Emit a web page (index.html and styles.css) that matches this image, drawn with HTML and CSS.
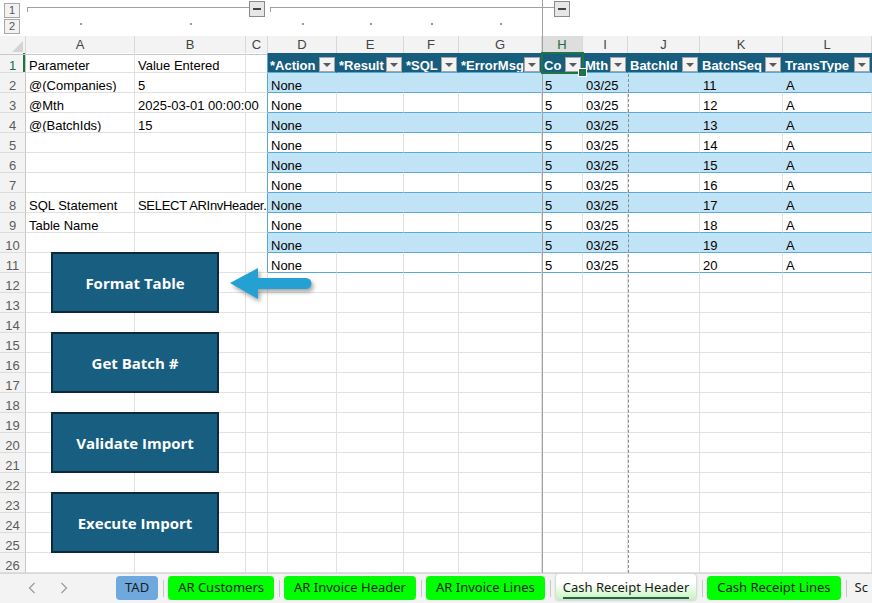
FILE: index.html
```html
<!DOCTYPE html>
<html lang="en">
<head>
  <meta charset="UTF-8">
  <link rel="stylesheet" href="styles.css">
</head>
<body>
  <div class="app">
    <div class="grid outline">
      <div class="levels"><div class="lvl">1</div><div class="lvl">2</div></div>
      <div class="glines">
        <div class="bracket b1"></div><div class="collapse"></div>
        <div class="bracket b2"></div><div class="collapse"></div>
      </div>
      <div class="dot"></div><div class="dot"></div><div></div>
      <div class="dot"></div><div class="dot"></div><div class="dot"></div><div class="dot"></div>
    </div>

    <div class="sheet">
      <div class="grid colhead">
        <div class="corner"></div><div>A</div><div>B</div><div>C</div><div>D</div><div>E</div><div>F</div><div>G</div><div class="on">H</div><div>I</div><div>J</div><div>K</div><div>L</div>
      </div>

      <div class="grid row">
        <div class="rh on">1</div><div>Parameter</div><div>Value Entered</div><div class="tl"></div>
        <div class="th">*Action<span class="dd"></span></div>
        <div class="th">*Result<span class="dd"></span></div>
        <div class="th">*SQL<span class="dd"></span></div>
        <div class="th">*ErrorMsg<span class="dd"></span></div>
        <div class="th">Co<span class="dd"></span></div>
        <div class="th">Mth<span class="dd"></span></div>
        <div class="th">BatchId<span class="dd"></span></div>
        <div class="th">BatchSeq<span class="dd"></span></div>
        <div class="th">TransType<span class="dd"></span></div>
      </div>
      <div class="grid row band">
        <div class="rh">2</div><div>@(Companies)</div><div>5</div><div class="tl"></div>
        <div class="t">None</div><div class="t"></div><div class="t"></div><div class="t"></div><div class="t">5</div><div class="t">03/25</div><div class="t"></div><div class="t">11</div><div class="t">A</div>
      </div>
      <div class="grid row">
        <div class="rh">3</div><div>@Mth</div><div class="span2 tl">2025-03-01 00:00:00</div>
        <div class="t">None</div><div class="t"></div><div class="t"></div><div class="t"></div><div class="t">5</div><div class="t">03/25</div><div class="t"></div><div class="t">12</div><div class="t">A</div>
      </div>
      <div class="grid row band">
        <div class="rh">4</div><div>@(BatchIds)</div><div>15</div><div class="tl"></div>
        <div class="t">None</div><div class="t"></div><div class="t"></div><div class="t"></div><div class="t">5</div><div class="t">03/25</div><div class="t"></div><div class="t">13</div><div class="t">A</div>
      </div>
      <div class="grid row">
        <div class="rh">5</div><div></div><div></div><div class="tl"></div>
        <div class="t">None</div><div class="t"></div><div class="t"></div><div class="t"></div><div class="t">5</div><div class="t">03/25</div><div class="t"></div><div class="t">14</div><div class="t">A</div>
      </div>
      <div class="grid row band">
        <div class="rh">6</div><div></div><div></div><div class="tl"></div>
        <div class="t">None</div><div class="t"></div><div class="t"></div><div class="t"></div><div class="t">5</div><div class="t">03/25</div><div class="t"></div><div class="t">15</div><div class="t">A</div>
      </div>
      <div class="grid row">
        <div class="rh">7</div><div></div><div></div><div class="tl"></div>
        <div class="t">None</div><div class="t"></div><div class="t"></div><div class="t"></div><div class="t">5</div><div class="t">03/25</div><div class="t"></div><div class="t">16</div><div class="t">A</div>
      </div>
      <div class="grid row band">
        <div class="rh">8</div><div>SQL Statement</div><div class="span2 tl tight">SELECT ARInvHeader.</div>
        <div class="t">None</div><div class="t"></div><div class="t"></div><div class="t"></div><div class="t">5</div><div class="t">03/25</div><div class="t"></div><div class="t">17</div><div class="t">A</div>
      </div>
      <div class="grid row">
        <div class="rh">9</div><div>Table Name</div><div></div><div class="tl"></div>
        <div class="t">None</div><div class="t"></div><div class="t"></div><div class="t"></div><div class="t">5</div><div class="t">03/25</div><div class="t"></div><div class="t">18</div><div class="t">A</div>
      </div>
      <div class="grid row band">
        <div class="rh">10</div><div></div><div></div><div class="tl"></div>
        <div class="t">None</div><div class="t"></div><div class="t"></div><div class="t"></div><div class="t">5</div><div class="t">03/25</div><div class="t"></div><div class="t">19</div><div class="t">A</div>
      </div>
      <div class="grid row">
        <div class="rh">11</div><div></div><div></div><div class="tl"></div>
        <div class="t">None</div><div class="t"></div><div class="t"></div><div class="t"></div><div class="t">5</div><div class="t">03/25</div><div class="t"></div><div class="t">20</div><div class="t">A</div>
      </div>
      <div class="grid row"><div class="rh">12</div><div></div><div></div><div></div><div></div><div></div><div></div><div></div><div></div><div></div><div></div><div></div><div></div></div>
      <div class="grid row"><div class="rh">13</div><div></div><div></div><div></div><div></div><div></div><div></div><div></div><div></div><div></div><div></div><div></div><div></div></div>
      <div class="grid row"><div class="rh">14</div><div></div><div></div><div></div><div></div><div></div><div></div><div></div><div></div><div></div><div></div><div></div><div></div></div>
      <div class="grid row"><div class="rh">15</div><div></div><div></div><div></div><div></div><div></div><div></div><div></div><div></div><div></div><div></div><div></div><div></div></div>
      <div class="grid row"><div class="rh">16</div><div></div><div></div><div></div><div></div><div></div><div></div><div></div><div></div><div></div><div></div><div></div><div></div></div>
      <div class="grid row"><div class="rh">17</div><div></div><div></div><div></div><div></div><div></div><div></div><div></div><div></div><div></div><div></div><div></div><div></div></div>
      <div class="grid row"><div class="rh">18</div><div></div><div></div><div></div><div></div><div></div><div></div><div></div><div></div><div></div><div></div><div></div><div></div></div>
      <div class="grid row"><div class="rh">19</div><div></div><div></div><div></div><div></div><div></div><div></div><div></div><div></div><div></div><div></div><div></div><div></div></div>
      <div class="grid row"><div class="rh">20</div><div></div><div></div><div></div><div></div><div></div><div></div><div></div><div></div><div></div><div></div><div></div><div></div></div>
      <div class="grid row"><div class="rh">21</div><div></div><div></div><div></div><div></div><div></div><div></div><div></div><div></div><div></div><div></div><div></div><div></div></div>
      <div class="grid row"><div class="rh">22</div><div></div><div></div><div></div><div></div><div></div><div></div><div></div><div></div><div></div><div></div><div></div><div></div></div>
      <div class="grid row"><div class="rh">23</div><div></div><div></div><div></div><div></div><div></div><div></div><div></div><div></div><div></div><div></div><div></div><div></div></div>
      <div class="grid row"><div class="rh">24</div><div></div><div></div><div></div><div></div><div></div><div></div><div></div><div></div><div></div><div></div><div></div><div></div></div>
      <div class="grid row"><div class="rh">25</div><div></div><div></div><div></div><div></div><div></div><div></div><div></div><div></div><div></div><div></div><div></div><div></div></div>
      <div class="grid row"><div class="rh">26</div><div></div><div></div><div></div><div></div><div></div><div></div><div></div><div></div><div></div><div></div><div></div><div></div></div>
    </div>

    <div class="tabbar">
      <div class="nav">
        <svg width="8" height="12" viewBox="0 0 8 12"><polyline points="6.5,1 1.5,6 6.5,11" fill="none" stroke="#9a9a9a" stroke-width="1.2"/></svg>
        <svg width="8" height="12" viewBox="0 0 8 12"><polyline points="1.5,1 6.5,6 1.5,11" fill="none" stroke="#9a9a9a" stroke-width="1.2"/></svg>
      </div>
      <div class="tab tad">TAD</div><div class="sep"></div>
      <div class="tab">AR Customers</div><div class="sep"></div>
      <div class="tab">AR Invoice Header</div><div class="sep"></div>
      <div class="tab">AR Invoice Lines</div><div class="sep"></div>
      <div class="tab active"><span>Cash Receipt Header</span></div><div class="sep"></div>
      <div class="tab">Cash Receipt Lines</div><div class="sep"></div>
      <div class="tab plain">Sc</div>
    </div>

    <!-- things drawn over the grid -->
    <div class="freeze"></div>
    <div class="pagebreak"></div>
    <div class="selbox"></div>

    <div class="macros">
      <button class="macro">Format Table</button>
      <button class="macro">Get Batch #</button>
      <button class="macro">Validate Import</button>
      <button class="macro">Execute Import</button>
    </div>

    <svg class="arrow" width="92" height="44" viewBox="0 0 92 44">
      <path d="M4 21 L32 6 L32 16 L80 16 A5.5 5.5 0 0 1 80 27 L32 27 L32 37 Z" fill="#25a0d3"/>
    </svg>
  </div>
</body>
</html>
```

FILE: styles.css
```css
* { box-sizing: border-box; }
body { margin: 0; background: #fff; font-family: "Liberation Sans", Arial, sans-serif; font-size: 13px; color: #000; }
.app { position: relative; width: 872px; height: 603px; overflow: hidden; }

.grid { display: grid; grid-template-columns: 26px 109px 111px 22px 69px 67px 55px 83px 41px 45px 72px 83px 1fr; }

/* outline (grouping) strip */
.outline { height: 36px; grid-template-rows: 18px 18px; }
.levels { grid-row: 1 / 3; display: flex; flex-direction: column; gap: 1px; padding: 3px 0 0 4px; }
.lvl { width: 16px; height: 15px; border: 1px solid #a8a8a8; background: #f2f2f2; color: #555; font-size: 11px; line-height: 13px; text-align: center; }
.glines { grid-column: 2 / -1; display: flex; align-items: flex-start; padding-left: 1px; }
.bracket { height: 5px; margin-top: 7px; border-top: 1px solid #a0a0a0; border-left: 1px solid #a0a0a0; }
.b1 { width: 222px; }
.b2 { width: 284px; margin-left: 5px; }
.collapse { width: 16px; height: 16px; margin-top: 1px; border: 1px solid #8a8a8a; background: #e6e6e6; display: flex; align-items: center; justify-content: center; }
.collapse::after { content: ""; width: 8px; height: 2px; background: #444; }
.dot { display: flex; justify-content: center; padding-top: 5px; }
.dot::after { content: ""; width: 2px; height: 2px; background: #9a9a9a; }

/* column letters */
.colhead { height: 17px; background: #f3f3f3; }
.colhead > div { border-right: 1px solid #d8d8d8; border-bottom: 1px solid #c8c8c8; color: #444; line-height: 17px; text-align: center; }
.colhead > .on { background: #dedede; color: #1d6b3f; border-bottom: 2px solid #217346; }
.corner { position: relative; }
.corner::after { content: ""; position: absolute; right: 2px; bottom: 2px; border-left: 11px solid transparent; border-bottom: 11px solid #d4d4d4; }

/* cells */
.row { height: 20px; }
.row > div { border-right: 1px solid #e1e1e1; border-bottom: 1px solid #e1e1e1; padding: 5px 2px 0 3px; line-height: 15px; white-space: nowrap; overflow: hidden; }
.row > .rh { background: #f3f3f3; border-right-color: #c8c8c8; border-bottom-color: #dcdcdc; color: #5b5b5b; text-align: center; padding: 5px 0 0; }
.row > .rh.on { color: #1d6b3f; box-shadow: inset -2px 0 #217346; }
.span2 { grid-column: span 2; }
.tight { letter-spacing: -0.3px; }
.row > .tl { border-right-color: #5aa7d8; }
.row > .t { border-bottom-color: #5aa7d8; }
.band > .t { background: #c0e4f5; border-right-color: #c0e4f5; }
.row > .th { display: flex; justify-content: space-between; background: #175e7e; border-right-color: #175e7e; border-bottom-color: #5aa7d8; color: #fff; font-weight: bold; padding: 5px 1px 0 2px; }
.dd { flex: none; width: 16px; height: 15px; margin-top: -1px; border: 1px solid #a4a4a4; background: #f3f3f3; display: flex; align-items: center; justify-content: center; }
.dd::after { content: ""; border-left: 4px solid transparent; border-right: 4px solid transparent; border-top: 4px solid #5a5a5a; }

/* sheet tabs */
.tabbar { height: 30px; background: #f3f3f3; border-top: 1px solid #d6d6d6; display: flex; align-items: flex-start; font-family: "Noto Sans", sans-serif; font-size: 13px; color: #1b1b1b; white-space: nowrap; }
.nav { width: 116px; flex: none; display: flex; gap: 24px; padding: 8px 0 0 28px; }
.tab { flex: none; height: 24px; margin-top: 2px; padding: 0 10px; border-radius: 4px; background: #00ff00; line-height: 23px; }
.tad { background: #6fa8dc; padding: 0 9px; }
.sep { flex: none; width: 1px; height: 17px; margin: 6px 4px 0 5px; background: #c8c8c8; }
.tab.active { height: 27px; margin-top: -1px; padding: 2px 7px 0; background: linear-gradient(#ffffff 35%, #c8f5bf); border: 1px solid #dadada; box-shadow: 0 1px 2px rgba(0, 0, 0, 0.12); }
.tab.active span { display: inline-block; line-height: 19px; border-bottom: 2px solid #1d6b3c; }
.tab.plain { background: none; padding: 0 4px; }

/* overlays */
.freeze { position: absolute; left: 542px; top: 0; width: 1px; height: 573px; background: #a2a2a2; }
.pagebreak { position: absolute; left: 628px; top: 74px; height: 499px; border-left: 1px dashed #8c8c8c; }
.selbox { position: absolute; left: 541px; top: 52px; width: 43px; height: 22px; border: 2px solid #217346; }
.selbox::after { content: ""; position: absolute; right: -5px; bottom: -5px; width: 7px; height: 7px; background: #217346; border: 1px solid #fff; }

.macros { position: absolute; left: 51px; top: 252px; display: flex; flex-direction: column; gap: 19px; }
.macro { width: 168px; height: 61px; margin: 0; padding: 0; background: #175e80; border: 2px solid #0e2a3a; color: #fff; font: 700 15px "Open Sans", Lato, sans-serif; }
.arrow { position: absolute; left: 226px; top: 262px; filter: drop-shadow(2px 3px 2px rgba(0, 0, 0, 0.35)); }
```
